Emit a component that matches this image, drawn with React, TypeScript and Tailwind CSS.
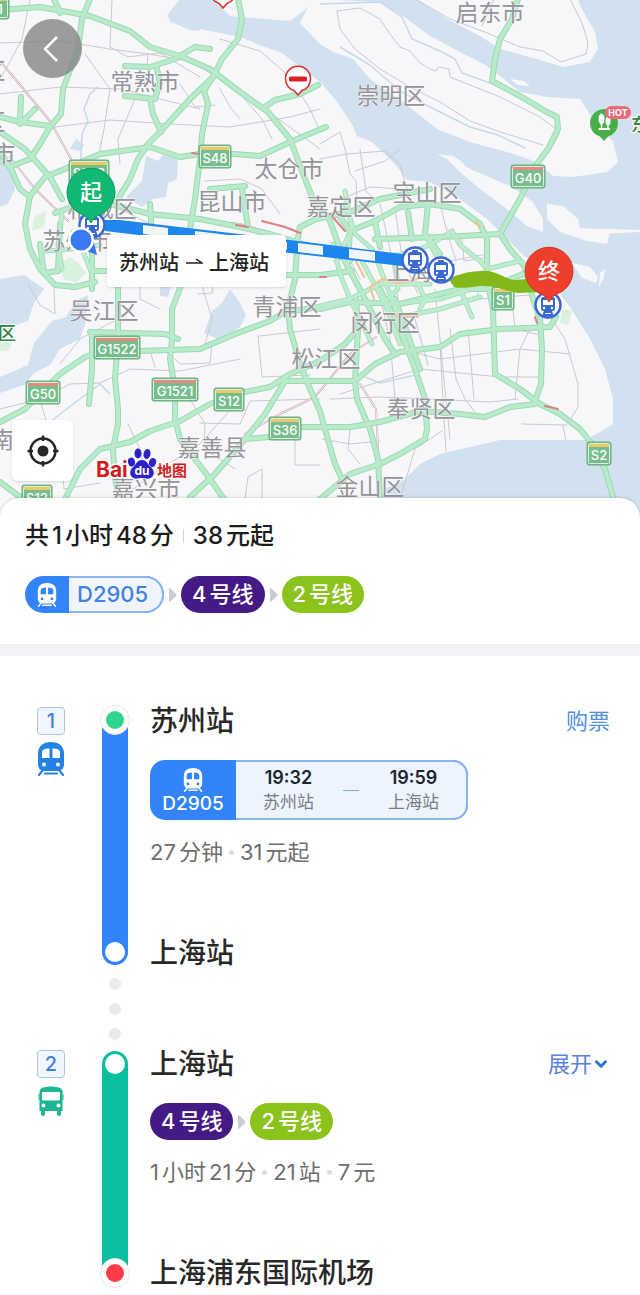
import { Fragment } from 'react'
import type { ReactNode } from 'react'
import { ChevronDown } from 'lucide-react'

const FONT = 'font-[Inter,"Noto_Sans_CJK_SC",sans-serif]'

const land = [
  '0,0 180,0 168,15 170,23 195,29 240,38 262,47 282,54 300,68 320,83 335,100 353,127 357,137 372,143 395,165 407,181 430,183 460,200 487,220 507,240 522,255 545,275 570,308 590,340 605,370 613,400 613,425 600,433 585,441 540,441 500,441 470,448 440,455 420,465 405,480 385,490 370,520 0,520',
  '212,0 230,17 290,22 310,7 316,0',
  '312,0 380,3 403,17 430,37 460,53 487,67 500,77 520,93 547,98 580,100 593,120 613,143 618,163 607,173 573,178 553,177 537,163 507,153 470,143 437,130 403,103 370,80 353,60 333,53 320,45 300,24',
  '417,0 447,20 480,37 500,50 537,60 563,68 590,63 598,50 595,33 580,7 578,0',
  '437,155 453,157 477,173 510,187 533,203 543,220 543,233 527,227 507,210 480,190 460,173 447,160',
  '547,205 563,207 578,220 580,230 610,233 607,245 587,242 560,233 547,220',
  '572,264 590,268 598,278 596,284 582,279',
  '600,274 605,270 604,278 599,288',
  '510,80 524,82 530,87 518,86',
]

const water = [
  '166,16 198,26 200,32 190,31 176,25',
  '0,163 12,172 15,190 8,205 0,208',
  '146,157 158,162 166,152 178,160 177,180 168,184 166,198 152,200 142,208 126,198 142,182',
  '0,280 24,276 44,290 34,304 28,322 10,328 0,336',
  '52,322 66,318 76,302 88,296 86,322 80,340 60,350 50,366 34,374 24,386 0,394 0,378 28,366 34,344',
  '230,290 240,304 246,316 240,328 220,341 204,334 212,312 222,304',
  '160,286 172,284 168,298 160,297',
  '76,140 84,146 80,152 70,150',
  '462,159 472,161 482,170 474,172 464,166',
]

const parks = [
  '34,218 46,212 44,228 32,232',
  '58,266 70,258 78,264 86,274 76,284 64,280',
  '0,340 12,344 8,352 0,352',
  '562,310 572,312 568,326 560,324',
]

const minorRoads = [
  '0,44 60,42 110,50 148,55 190,62 240,92 320,150',
  '30,0 22,40 6,70 0,80',
  '112,0 110,48 128,58 160,54 200,78',
  '85,55 110,90 104,130 98,160',
  '0,95 60,88 120,90 200,110',
  '55,128 110,121 170,125 230,128 290,118 320,110',
  '135,100 118,140 120,165',
  '147,70 148,55',
  '220,40 260,52 290,78 310,110 318,128',
  '180,85 195,108 215,106',
  '220,90 230,108 240,120',
  '205,182 240,180 262,190 280,215',
  '240,95 262,120 272,140',
  '120,210 160,230 180,260',
  '28,285 40,306 55,315 54,290',
  '140,250 140,300 160,310',
  '118,320 80,340 60,365',
  '0,410 40,400 70,385 100,384 130,370 180,372 240,360',
  '60,440 64,490 100,484',
  '40,402 52,440',
  '150,352 155,368',
  '165,350 180,365 210,364 212,345',
  '198,295 212,294 214,280',
  '200,280 212,320 205,345',
  '258,336 262,378 310,376',
  '260,337 320,330',
  '128,425 140,450 146,480',
  '120,500 160,470 200,445 240,400',
  '190,400 205,425 204,450 235,470',
  '200,424 240,425 250,402 320,400',
  '295,425 295,466 320,466',
  '245,500 248,478 262,470 262,500',
  '337,12 340,30 355,50 380,70 410,88 440,103 470,122 500,133 543,146',
  '337,12 360,9 380,20 390,35 400,48 410,52 420,64 430,70 436,72 438,68 449,70 450,78 500,98 540,118 560,133 551,150',
  '415,0 450,20 490,35 520,48 543,52 561,63 586,55 588,44 582,24 570,0',
  '482,27 494,0',
  '320,145 340,133 345,150 350,175 356,182 357,205',
  '320,160 346,155 385,152 400,166 410,200',
  '330,205 370,188 402,190',
  '360,150 366,192 372,198',
  '355,172 385,162 400,150',
  '400,350 440,360 520,350 570,355',
  '378,290 390,340 395,400',
  '435,290 440,340 450,440',
  '450,330 456,380 465,400 480,420',
  '468,330 474,400',
  '530,330 520,350 515,400',
  '340,395 420,370 500,378 538,378',
  '330,400 380,398 430,400 490,403 518,400',
  '322,440 350,445 380,442',
  '440,345 444,420 446,452',
  '545,310 565,340 578,385 578,408 568,424',
  '522,425 567,426',
  '563,426 566,442',
  '400,500 415,450 442,432',
  '350,430 348,450 360,465',
  '475,286 480,300 530,296',
  '512,300 515,330 540,336',
  '380,205 390,250 398,300',
  '395,210 402,258 418,295',
  '440,205 448,236 456,262',
  '462,240 464,262 490,258',
  '450,262 487,255',
  '336,235 360,280',
]

const cityRoads = [
  '345,192 352,230 336,262',
  '345,205 355,235 372,250 376,262',
  '348,258 400,256 430,246 452,232',
  '452,232 460,246 480,262 487,270',
  '425,235 436,256 450,266',
  '333,245 340,275 350,300 372,345',
  '362,262 385,305 400,345',
  '378,264 392,300 408,350',
  '395,256 398,290 388,300',
  '320,307 350,300 380,285 430,285',
  '400,318 440,310 480,298',
  '395,305 440,300 487,285',
  '460,290 472,318',
  '418,285 425,300 420,310',
  '487,270 520,262',
  '62,215 58,245 62,270',
  '45,252 75,250 100,246',
  '80,245 92,275',
]

const highways = [
  '0,11 40,8 90,17 130,32 150,48 180,57 210,70 240,93 268,113 290,140 305,180 313,200 330,222 340,250 352,276',
  '90,0 82,20 78,50 63,90 61,115 50,128 40,145 30,160 12,167 0,162',
  '54,0 60,14',
  '0,118 20,123 50,127',
  '20,125 35,110',
  '21,98 20,122',
  '238,0 242,20 238,40 222,60 213,78 190,100 160,133 148,145 138,160 130,180 118,200',
  '213,78 204,92 208,105 202,135 200,160 195,200 190,230',
  '60,172 100,155 150,148 180,158 200,155 235,155 260,157 290,143 326,128',
  '0,133 25,150 50,178 62,200',
  '60,172 45,178 30,197 25,225 30,250 40,270 55,286 75,288 95,283',
  '0,152 12,172 20,190 30,198',
  '125,67 150,68 175,60 195,48 210,50',
  '125,97 155,100 160,84 157,70',
  '150,100 153,115 161,133',
  '265,108 275,101 300,95 318,86',
  '55,214 80,205 110,205 150,215 200,220 240,228 270,235 320,250 350,262',
  '150,205 152,240 118,262 118,290',
  '242,190 248,228',
  '210,190 245,187',
  '297,244 300,228 316,220 350,213 380,200 430,190',
  '92,250 92,290',
  '40,245 44,274 58,272 60,225',
  '92,272 140,272 200,270 260,276 320,276 352,272',
  '118,285 118,340 115,380 118,410 118,425 113,450 115,480 120,500',
  '182,284 172,310 172,340 170,360 175,390 175,420 180,440 195,460 210,480 224,500',
  '297,250 295,280 288,310 290,330 300,365 310,390 320,412 325,430 335,465 342,480',
  '0,423 25,410 45,390 60,375 85,358 100,353 140,352 200,350 235,335 270,322 285,313 320,308',
  '90,333 165,335 178,340',
  '92,334 92,370 89,405',
  '0,483 20,498',
  '60,510 80,470 100,450 130,443 150,432 180,422 210,405 240,394 270,388 290,375 320,362 345,345 358,330',
  '190,498 215,475 245,440 265,415 285,382 320,382 355,382 375,365 400,353 440,348 460,335 500,330 550,328 556,318',
  '245,440 270,438 300,428 350,428 380,423 420,412 460,415 485,418 510,408 535,405',
  '518,0 512,20 500,40 495,60 492,82 520,97 545,112 557,118 558,130 548,150 537,165 520,200 500,235 510,250 525,268 533,300 540,320 542,350 541,385 535,402',
  '350,232 375,222 400,208 430,205 460,210 480,225 487,240 487,280 493,310 495,375 520,390 540,405 560,415 580,430 592,445 605,470 615,505',
  '348,262 350,232 338,215',
  '375,240 440,238 500,235',
  '428,205 425,235 440,255',
  '408,213 412,240',
  '375,222 380,248',
  '320,310 350,303 400,305 460,290 487,290 530,272',
  '355,382 357,400 370,430 378,460 380,500',
  '345,262 365,300 385,340 395,355',
  '380,290 400,330 415,370 425,400 427,430 425,440 400,455 380,465 350,475 320,500',
  '356,300 358,330 355,382',
  '395,300 420,370',
]

const railways = [
  '0,62 30,98 50,122 70,158 88,195',
  '10,158 35,190 68,222',
  '190,220 240,225 275,235',
  '245,435 280,415 315,398 350,355 376,338',
  '360,385 376,410 380,490',
]

const jams = [
  '262,222 285,228 300,234',
  '236,226 248,228',
  '192,154 199,155',
  '545,407 558,410',
  '330,215 345,232',
  '320,278 326,278',
  '535,318 537,324',
]

const slowRoads = [
  '370,288 382,280 398,284 418,280',
  '374,300 370,288',
  '476,222 480,228',
  '390,316 418,318',
  '356,262 364,278',
]

const places: [string, number, number][] = [
  ['常熟市', 145, 82],
  ['启东市', 490, 13],
  ['崇明区', 391, 96],
  ['太仓市', 289, 169],
  ['昆山市', 232, 202],
  ['嘉定区', 341, 207],
  ['宝山区', 427, 193],
  ['相城区', 102, 209],
  ['苏州市', 77, 241],
  ['上海市', 421, 272],
  ['吴江区', 104, 311],
  ['青浦区', 287, 307],
  ['闵行区', 385, 323],
  ['松江区', 326, 359],
  ['奉贤区', 421, 409],
  ['嘉善县', 212, 448],
  ['嘉兴市', 146, 489],
  ['金山区', 370, 487],
  ['区', -6, 71],
  ['区', -6, 122],
  ['市', 4, 154],
  ['南浔', 14, 440],
]

const shields: [string, number, number, number][] = [
  ['S1', -4, 8, 26],
  ['S48', 215, 157, 32],
  ['S228', 89, 172, 40],
  ['G40', 528, 177, 34],
  ['S1', 503, 299, 22],
  ['G1522', 117, 348, 46],
  ['G50', 43, 393, 34],
  ['G1521', 175, 390, 46],
  ['S12', 229, 400, 30],
  ['S36', 285, 429, 32],
  ['S2', 599, 454, 24],
  ['S12', 37, 497, 30],
]

function Lines({ items, color, width }: { items: string[]; color: string; width: number }) {
  return (
    <g fill="none" stroke={color} strokeWidth={width} strokeLinejoin="round" strokeLinecap="round">
      {items.map((points) => (
        <polyline key={points} points={points} />
      ))}
    </g>
  )
}

function StationMark({ x, y }: { x: number; y: number }) {
  return (
    <g transform={`translate(${x} ${y})`}>
      <circle r="12.500" fill="#fff" stroke="#3a68d2" strokeWidth="2.500" />
      <rect x="-7" y="-8" width="14" height="14" rx="2.500" fill="#3a68d2" />
      <rect x="-3" y="-10" width="6" height="3" rx="1" fill="#3a68d2" />
      <rect x="-5" y="-5" width="10" height="5" rx="0.500" fill="#fff" />
      <circle cx="-4" cy="3" r="1.200" fill="#fff" />
      <circle cx="4" cy="3" r="1.200" fill="#fff" />
      <path d="M-6 11L-4 6H4L6 11Z" fill="#3a68d2" />
      <path d="M-3 8.500H3" stroke="#fff" strokeWidth="1" />
    </g>
  )
}

function Pin({ x, y, label, fill, edge }: { x: number; y: number; label: string; fill: string; edge: string }) {
  return (
    <g transform={`translate(${x} ${y})`}>
      <path
        d="M0 31C-2 27-5 24-9 22.500A24 24 0 1 1 9 22.500C5 24 2 27 0 31Z"
        fill={fill}
        stroke={edge}
        strokeWidth="1"
      />
      <text y="8" fontSize="22" fontWeight="500" fill="#fff" textAnchor="middle">
        {label}
      </text>
    </g>
  )
}

function ClosedMark({ x, y }: { x: number; y: number }) {
  return (
    <g transform={`translate(${x} ${y})`}>
      <path d="M0 16L-4 11.500A12.500 12.500 0 1 1 4 11.500Z" fill="#fff" stroke="#d92d33" strokeWidth="1.500" />
      <rect x="-9" y="-2.500" width="18" height="5" rx="1.500" fill="#d8222a" />
    </g>
  )
}

function BaiduLogo() {
  return (
    <g>
      <g stroke="#fff" strokeWidth="3" paintOrder="stroke" strokeLinejoin="round">
        <text x="96" y="478" fontSize="21" fontWeight="700" fill="#d3191d">
          Bai
        </text>
        <text x="157" y="477" fontSize="15" fontWeight="700" fill="#d3191d">
          地图
        </text>
        <g fill="#2a21c9" strokeWidth="1">
          <ellipse cx="131.500" cy="463" rx="3.500" ry="4.500" transform="rotate(-15 131.500 463)" />
          <ellipse cx="138" cy="454.500" rx="3.500" ry="5" />
          <ellipse cx="147" cy="455" rx="3.500" ry="5" transform="rotate(12 147 455)" />
          <ellipse cx="152.500" cy="463.500" rx="3.500" ry="4.500" transform="rotate(20 152.500 463.500)" />
          <path d="M142 461C147 461 148 466 151 468C154 471 155 475 152 478C149 481 146 479 142 479C138 479 135 481 132 478C129 475 130 471 133 468C136 466 137 461 142 461Z" />
        </g>
      </g>
      <text x="142" y="476" fontSize="12" fontWeight="700" fill="#fff" textAnchor="middle">
        du
      </text>
    </g>
  )
}

function RouteMap() {
  return (
    <svg
      viewBox="0 0 640 520"
      preserveAspectRatio="xMidYMid slice"
      className="block h-full w-full"
      role="img"
      aria-label="苏州站到上海浦东国际机场路线图"
    >
      <rect width="640" height="520" fill="#d2e1ef" />
      <g fill="#f7f7f9">
        {land.map((points) => (
          <polygon key={points} points={points} />
        ))}
        <path d="M575 229L640 231V233L580 236Z" />
      </g>
      <g fill="#d2e1ef">
        {water.map((points) => (
          <polygon key={points} points={points} />
        ))}
      </g>
      <g fill="#d9f1dd">
        {parks.map((points) => (
          <polygon key={points} points={points} />
        ))}
      </g>
      <g fill="none" stroke="#c6d8ea" strokeWidth="1.500">
        <path d="M80 178L82 135L88 122L84 110L90 95L98 88" />
        <path d="M320 5L380 3L402 18L412 40L440 52L455 60L462 74L490 84" />
        <path d="M340 48L370 66L400 92L430 108L470 128L498 136L525 149" />
        <path d="M365 378L380 384L420 375" />
        <path d="M415 320L428 366" />
        <path d="M30 440L60 415L100 385L110 395" />
      </g>

      <Lines items={minorRoads} color="#cbc8d0" width={1} />
      <Lines items={railways} color="#c9a9ae" width={2} />
      <Lines items={railways} color="#f7efef" width={1} />
      <Lines items={cityRoads} color="#a6dfbc" width={5} />
      <Lines items={highways} color="#98dab3" width={6} />
      <Lines items={cityRoads} color="#c0edd0" width={3} />
      <Lines items={highways} color="#b9ebcb" width={4} />
      <Lines items={slowRoads} color="#f3c38a" width={2} />
      <Lines items={jams} color="#dd8080" width={2} />

      <g fontSize="23" fill="#949499" stroke="#f7f7f9" strokeWidth="1" paintOrder="stroke" textAnchor="middle">
        {places.map(([name, x, y]) => (
          <text key={name + y} x={x} y={y + 9}>
            {name}
          </text>
        ))}
      </g>
      <g fontSize="18" fontWeight="500" fill="#35823c" stroke="#fff" strokeWidth="2" paintOrder="stroke">
        <text x="-2" y="341">
          区
        </text>
        <text x="631" y="132">
          东滩
        </text>
      </g>

      {shields.map(([name, x, y, w]) => (
        <g key={name + x}>
          <rect x={x - w / 2} y={y - 11} width={w} height="23" rx="2" fill="#78bd8d" stroke="#6aac80" />
          <rect x={x - w / 2 + 1.5} y={y - 9.5} width={w - 3} height="20" rx="1" fill="none" stroke="#d8f0de" />
          <rect x={x - w / 2 + 2} y={y - 9} width={w - 4} height="3" fill={name[0] === 'G' ? '#e58a80' : '#ecc869'} />
          <text x={x} y={y + 7} fontSize="13" fontWeight="500" fill="#fff" textAnchor="middle">
            {name}
          </text>
        </g>
      ))}

      {/* train leg, striped */}
      <path d="M105 221H120L290 241L410 256V268L290 254L105 232Z" fill="#1f86f0" />
      <g fill="#f1f6f8">
        <path d="M143 226L168 229V238L143 235Z" />
        <path d="M195 232L287 243V251L195 241Z" />
        <path d="M298 244L323 247V256L298 253Z" />
        <path d="M349 250L375 253V262L349 259Z" />
      </g>
      {/* metro leg */}
      <path
        d="M448 279C460 276 464 273 480 272C496 270 503 280 515 281L540 279L542 293L518 294C505 292 496 286 482 287C470 288 462 290 454 288Z"
        fill="#84b81a"
      />

      <StationMark x={92} y={226} />
      <StationMark x={415} y={261} />
      <StationMark x={441} y={271} />
      <StationMark x={548} y={306} />

      <path d="M97 256L84 251L94 244Z" fill="#3c74ea" />
      <circle cx="81" cy="241" r="13" fill="#fff" />
      <circle cx="81" cy="241" r="10.500" fill="#3a7bf4" />

      <Pin x={91} y={193} label="起" fill="#10b872" edge="#0b9a5e" />
      <Pin x={549} y={272} label="终" fill="#ee3f2c" edge="#cc3527" />

      <ClosedMark x={298} y={80} />
      <ClosedMark x={223} y={-7} />

      <g transform="translate(604 124)">
        <path d="M0 18L-4 13.500A14 14 0 1 1 4 13.500Z" fill="#48ae48" />
        <g fill="#fff">
          <ellipse cx="-2.500" cy="-4" rx="3" ry="5.500" />
          <ellipse cx="4" cy="-2" rx="2.500" ry="4.500" />
          <path d="M-3.200 0h1.400v5h5V0h1.500v5H6v2H-5.500V5h2.300z" />
        </g>
        <rect x="1" y="-17" width="26" height="13" rx="6.500" fill="#f0697c" />
        <text x="14" y="-7" fontSize="9" fontWeight="700" fill="#fff" textAnchor="middle">
          HOT
        </text>
      </g>

      <BaiduLogo />
    </svg>
  )
}

function TrainIcon({ className, hole }: { className: string; hole: string }) {
  return (
    <svg viewBox="0 0 28 34" className={className} fill="currentColor" aria-hidden="true">
      <path d="M14 0C22 0 27 4 27 12V22C27 26.500 24.500 29 20 29H8C3.500 29 1 26.500 1 22V12C1 4 6 0 14 0Z" />
      <g fill={hole}>
        <path d="M12.500 6.500V16H5V11C5 7.500 7.500 6.500 12.500 6.500Z" />
        <path d="M15.500 6.500V16H23V11C23 7.500 20.500 6.500 15.500 6.500Z" />
        <circle cx="7" cy="22.500" r="2" />
        <circle cx="21" cy="22.500" r="2" />
      </g>
      <path
        d="M5.500 28.500L2 33M22.500 28.500L26 33M8 31.500H20"
        stroke="currentColor"
        strokeWidth="2.200"
        strokeLinecap="round"
      />
    </svg>
  )
}

function BusIcon() {
  return (
    <svg viewBox="0 0 28 32" className="h-8 w-7 text-[#1eb592]" fill="currentColor" aria-hidden="true">
      <path d="M5 3C10 1 18 1 23 3C25 4 25.500 5 25.500 7V26H2.500V7C2.500 5 3 4 5 3Z" />
      <path d="M1.500 9h1v6h-1zM25.500 9h1v6h-1z" />
      <rect x="4" y="24" width="4" height="7" rx="2" />
      <rect x="20" y="24" width="4" height="7" rx="2" />
      <g fill="#fff">
        <rect x="5" y="7" width="18" height="8.500" rx="1" />
        <circle cx="6.500" cy="20.500" r="2" />
        <circle cx="21.500" cy="20.500" r="2" />
      </g>
    </svg>
  )
}

// keeps a little air between digits and Chinese characters
function Mixed({ text }: { text: string }) {
  return (
    <span className="inline-flex items-baseline gap-[3px] whitespace-nowrap">
      {text
        .split(/(\d+)/)
        .filter(Boolean)
        .map((part, i) => (
          <span key={i}>{part}</span>
        ))}
    </span>
  )
}

function Arrow() {
  return (
    <svg viewBox="0 0 9 14" className="h-[14px] w-[9px] text-[#c9cdd1]" fill="currentColor" aria-hidden="true">
      <path d="M1 0.500Q2 0 3 1L8 6Q9 7 8 8L3 13Q2 14 1 13.500Z" />
    </svg>
  )
}

function MetroChips() {
  return (
    <>
      <span className="flex h-[37px] items-center rounded-full bg-[#441a84] px-[11px] text-[22px] font-medium text-white">
        <Mixed text="4号线" />
      </span>
      <Arrow />
      <span className="flex h-[37px] items-center rounded-full bg-[#8cc21c] px-[11px] text-[22px] font-medium text-white">
        <Mixed text="2号线" />
      </span>
    </>
  )
}

function Detail({ items }: { items: string[] }) {
  return (
    <p className="mt-[17px] flex h-[30px] items-center gap-[6px] text-[22px] text-[#6e6e6e]">
      {items.map((item, i) => (
        <Fragment key={item}>
          {i > 0 && <span className="h-[5px] w-[5px] rounded-full bg-[#dcdde0]" />}
          <Mixed text={item} />
        </Fragment>
      ))}
    </p>
  )
}

type StepProps = {
  index: number
  icon: ReactNode
  track: ReactNode
  from: string
  to: string
  action: ReactNode
  children: ReactNode
}

function Step({ index, icon, track, from, to, action, children }: StepProps) {
  return (
    <li className="flex pr-[30px] pl-[37px]">
      <div className="flex w-7 flex-col items-center gap-[7px] pt-1">
        <span className="flex h-7 w-7 items-center justify-center rounded-[4px] border border-[#a9c5ea] bg-[#f0f6fd] text-[20px] font-medium text-[#4a80dd]">
          {index}
        </span>
        {icon}
      </div>
      <div className="mt-[5px] mb-[6px] ml-[37px] flex w-[26px] shrink-0">{track}</div>
      <div className="ml-[22px] min-w-0 flex-1">
        <div className="flex items-center justify-between">
          <h2 className="text-[28px] leading-9 font-medium text-[#282828]">{from}</h2>
          {action}
        </div>
        {children}
        <h2 className="mt-[68px] text-[28px] leading-9 font-medium text-[#282828]">{to}</h2>
      </div>
    </li>
  )
}

function StopTime({ time, name }: { time: string; name: string }) {
  return (
    <span className="flex flex-col items-center">
      <span className="text-[18px] leading-6 font-semibold text-[#20242c]">{time}</span>
      <span className="text-[17px] leading-6 text-[#787c84]">{name}</span>
    </span>
  )
}

export default function App() {
  return (
    <main className={`min-h-screen bg-white text-[#1c1c1c] ${FONT}`}>
      <div className="relative h-[518px] overflow-hidden">
        <RouteMap />
        <button
          type="button"
          aria-label="返回"
          className="absolute top-[19px] left-[23px] flex h-[59px] w-[59px] items-center justify-center rounded-full bg-[#858585]/80 text-white"
        >
          <svg viewBox="0 0 16 26" className="mr-1 h-[26px] w-4" fill="none" stroke="currentColor" strokeWidth="2.500" aria-hidden="true">
            <path d="M14 1L2 13L14 25" />
          </svg>
        </button>
        <div className="absolute top-[235px] left-[107px] flex h-[52px] items-center gap-[6px] rounded-[4px] bg-white pt-1 pr-[17px] pl-3 text-[20px] font-medium whitespace-nowrap text-[#222] shadow-sm">
          苏州站
          <svg viewBox="0 0 18 10" className="h-[10px] w-[18px]" fill="none" stroke="currentColor" strokeWidth="1.500" aria-hidden="true">
            <path d="M1 5H17L11 1" />
          </svg>
          上海站
        </div>
        <button
          type="button"
          aria-label="定位"
          className="absolute top-[420px] left-[12px] flex h-[61px] w-[61px] items-center justify-center rounded-[6px] bg-white text-[#262626] shadow-sm"
        >
          <svg viewBox="0 0 32 32" className="h-8 w-8" fill="none" stroke="currentColor" strokeWidth="2.500" aria-hidden="true">
            <circle cx="16" cy="16" r="12.500" />
            <circle cx="16" cy="16" r="5.500" fill="currentColor" stroke="none" />
            <path d="M16 0.500V6M16 26V31.500M0.500 16H6M26 16H31.500" />
          </svg>
        </button>
      </div>

      <section className="relative -mt-5 rounded-t-[20px] bg-white px-[25px] pt-[23px] pb-[31px] shadow-[0_-1px_3px_rgba(0,0,0,0.12)]">
        <h1 className="flex h-[30px] items-center gap-[9px] text-[24px] font-medium">
          <Mixed text="共1小时48分" />
          <span className="h-[14px] w-px bg-[#d5d7da]" />
          <Mixed text="38元起" />
        </h1>
        <div className="mt-[25px] flex items-center gap-1">
          <span className="flex h-[37px] items-stretch overflow-hidden rounded-full bg-[#3384fb] text-[22px] font-medium text-[#4380e2]">
            <span className="flex w-11 items-center justify-center text-white">
              <TrainIcon className="h-6 w-5" hole="#3384fb" />
            </span>
            <span className="flex items-center rounded-r-full border-2 border-l-0 border-[#8db5f0] bg-[#f0f5fd] pr-[14px] pl-2">D2905</span>
          </span>
          <Arrow />
          <MetroChips />
        </div>
      </section>

      <div className="h-3 bg-[#f1f3f6]" />

      <ol className="pt-[47px] pb-1">
        <Step
          index={1}
          icon={<TrainIcon className="h-[34px] w-7 text-[#2581e4]" hole="#fff" />}
          track={
            <div className="flex w-full flex-col items-center justify-between rounded-full bg-[#3384fb]">
              <span className="-mt-[3px] flex h-[30px] w-[30px] items-center justify-center rounded-full border border-[#eee3e3] bg-white">
                <span className="h-[18px] w-[18px] rounded-full bg-[#2fd48f]" />
              </span>
              <span className="mb-[3px] h-5 w-5 rounded-full bg-white" />
            </div>
          }
          from="苏州站"
          to="上海站"
          action={
            <a href="#ticket" className="text-[22px] leading-9 text-[#5590da]">
              购票
            </a>
          }
        >
          <div className="mt-[21px] flex h-[60px] w-[318px] overflow-hidden rounded-[15px] bg-[#3384fb]">
            <div className="flex w-[86px] shrink-0 flex-col items-center justify-center text-white">
              <TrainIcon className="mt-1 h-6 w-5" hole="#3384fb" />
              <span className="text-[19px] leading-6 font-medium">D2905</span>
            </div>
            <div className="flex flex-1 items-center justify-between rounded-r-[15px] border-2 border-l-0 border-[#8ab4ee] bg-[#eef4ff] px-[27px]">
              <StopTime time="19:32" name="苏州站" />
              <span className="h-px w-4 bg-[#83b1e6]" />
              <StopTime time="19:59" name="上海站" />
            </div>
          </div>
          <Detail items={['27分钟', '31元起']} />
        </Step>

        <li aria-hidden="true" className="flex h-[75px] flex-col justify-center gap-[13px] pl-[109px]">
          <span className="h-3 w-3 rounded-full bg-[#e9eaed]" />
          <span className="h-3 w-3 rounded-full bg-[#e9eaed]" />
          <span className="h-3 w-3 rounded-full bg-[#e9eaed]" />
        </li>

        <Step
          index={2}
          icon={<BusIcon />}
          track={
            <div className="flex w-full flex-col items-center justify-between rounded-full bg-[#0abf9e]">
              <span className="mt-[3px] h-5 w-5 rounded-full bg-white" />
              <span className="-mb-[3px] flex h-[30px] w-[30px] items-center justify-center rounded-full border border-[#e4ecea] bg-white">
                <span className="h-[18px] w-[18px] rounded-full bg-[#fb3b48]" />
              </span>
            </div>
          }
          from="上海站"
          to="上海浦东国际机场"
          action={
            <button type="button" className="flex items-center text-[22px] leading-9 text-[#5a80e0]">
              展开
              <ChevronDown className="h-[18px] w-[18px] text-[#2876d2]" strokeWidth={4} />
            </button>
          }
        >
          <div className="mt-[21px] flex items-center gap-1">
            <MetroChips />
          </div>
          <Detail items={['1小时21分', '21站', '7元']} />
        </Step>
      </ol>
    </main>
  )
}
